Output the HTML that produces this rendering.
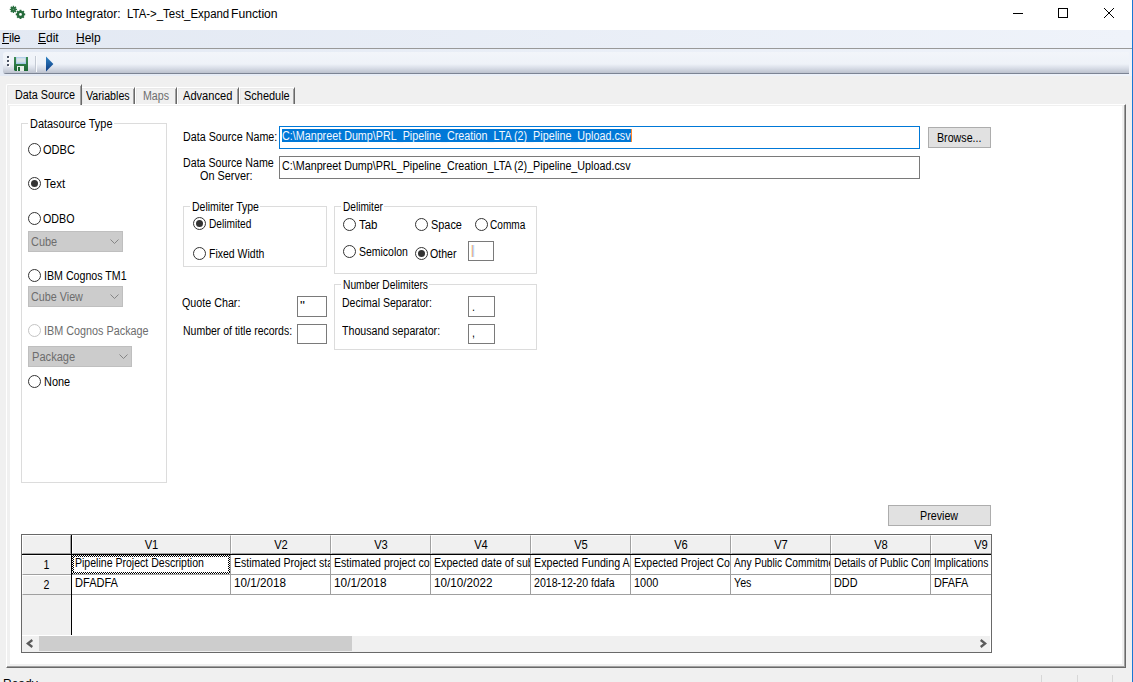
<!DOCTYPE html>
<html><head><meta charset="utf-8"><title>Turbo Integrator</title>
<style>
html,body{margin:0;padding:0;}
body{width:1133px;height:682px;position:relative;overflow:hidden;background:#f0f0f0;font-family:"Liberation Sans",sans-serif;font-size:12px;color:#000;}
.a{position:absolute;white-space:nowrap;}
.t{position:absolute;white-space:nowrap;font-size:12px;line-height:14px;height:14px;transform:scaleX(.9167);transform-origin:0 0;}
.g{color:#6d6d6d;}
#title{left:0;top:0;width:1132px;height:30px;background:#fff;}
#title .cap{font-size:12px;line-height:15px;}
#menu{left:0;top:30px;width:1132px;height:18px;background:linear-gradient(90deg,#e3e9f3,#eff3fa);}
#menu span{position:absolute;top:0;font-size:12px;line-height:16px;}
#tbbg{left:0;top:49px;width:1132px;height:27px;background:linear-gradient(90deg,#e4eaf4,#eff3fa);}
#tb{left:3px;top:52px;width:1126px;height:22px;border-radius:3px 0 0 3px;background:linear-gradient(180deg,#f2f5fa 0,#eef2f8 12px,#d9dee8 16px,#bcc2ce 21px,#7c8494 21px,#7c8494 22px);}
.radio{position:absolute;width:11px;height:11px;border:1px solid #333;border-radius:50%;background:#fff;}
.radio.on::after{content:"";position:absolute;left:2px;top:2px;width:7px;height:7px;border-radius:50%;background:#333;}
.radio.dis{border-color:#c4c4c4;}
.fs{position:absolute;border:1px solid #dcdcdc;box-sizing:border-box;}
.combo{position:absolute;background:#ccc;border:1px solid #bfbfbf;box-sizing:border-box;height:21px;}
.inp{position:absolute;background:#fff;border:1px solid #7a7a7a;box-sizing:border-box;}
.btn{position:absolute;background:#e1e1e1;border:1px solid #adadad;box-sizing:border-box;}
.tab{position:absolute;box-sizing:border-box;background:#f0f0f0;box-shadow:inset 1px 1px 0 #e9e9e9;border-left:1px solid #fff;border-top:1px solid #fff;border-right:1px solid #696969;}
.tab::after{content:"";position:absolute;right:0;top:1px;bottom:0;width:1px;background:#a0a0a0;}
.hc{position:absolute;box-sizing:border-box;background:#f0f0f0;border-left:1px solid #fff;border-top:1px solid #fff;border-right:1px solid #a0a0a0;border-bottom:1px solid #a0a0a0;}
.cell{position:absolute;box-sizing:border-box;background:#fff;border-right:1px solid #a0a0a0;border-bottom:1px solid #a0a0a0;overflow:hidden;}
</style></head><body>

<div id="title" class="a">
<svg class="a" style="left:8px;top:4px" width="20" height="20" viewBox="0 0 20 20">
 <path d="M4.66 2.91L4.71 1.77L6.09 1.77L6.14 2.91L6.64 3.12L7.48 2.34L8.46 3.32L7.68 4.16L7.89 4.66L9.03 4.71L9.03 6.09L7.89 6.14L7.68 6.64L8.46 7.48L7.48 8.46L6.64 7.68L6.14 7.89L6.09 9.03L4.71 9.03L4.66 7.89L4.16 7.68L3.32 8.46L2.34 7.48L3.12 6.64L2.91 6.14L1.77 6.09L1.77 4.71L2.91 4.66L3.12 4.16L2.34 3.32L3.32 2.34L4.16 3.12Z" fill="#2b7041"/>
 <circle cx="5.4" cy="5.4" r="0.7" fill="#5f9a70"/>
 <path d="M11.45 6.85L11.60 5.69L13.40 5.69L13.55 6.85L14.27 7.15L15.20 6.43L16.47 7.70L15.75 8.63L16.05 9.35L17.21 9.50L17.21 11.30L16.05 11.45L15.75 12.17L16.47 13.10L15.20 14.37L14.27 13.65L13.55 13.95L13.40 15.11L11.60 15.11L11.45 13.95L10.73 13.65L9.80 14.37L8.53 13.10L9.25 12.17L8.95 11.45L7.79 11.30L7.79 9.50L8.95 9.35L9.25 8.63L8.53 7.70L9.80 6.43L10.73 7.15ZM13.9 10.4A1.4 1.4 0 1 0 11.1 10.4A1.4 1.4 0 1 0 13.9 10.4Z" fill="#256b3b" fill-rule="evenodd"/>
</svg>
<span class="a cap" style="left:31.00px;top:7px;transform:scaleX(1.0075);transform-origin:0 0">Turbo Integrator:</span><span class="a cap" style="left:127.30px;top:7px;transform:scaleX(0.9526);transform-origin:0 0">LTA-&gt;_Test_Expand</span><span class="a cap" style="left:231.20px;top:7px;transform:scaleX(1.0125);transform-origin:0 0">Function</span>
<svg class="a" style="left:1008px;top:3px" width="112" height="22" viewBox="0 0 112 22" fill="none" stroke="#000" stroke-width="1">
 <path d="M5 10.5H15"/>
 <rect x="50.5" y="5.5" width="9" height="9"/>
 <path d="M96 5L106 15M106 5L96 15"/>
</svg>
</div>
<div class="a" style="left:1132px;top:0;width:1px;height:682px;background:#1878d4"></div>
<div id="menu" class="a"><span style="left:2px;letter-spacing:-0.3px"><u>F</u>ile</span><span style="left:38px"><u>E</u>dit</span><span style="left:76px"><u>H</u>elp</span></div>
<div class="a" style="left:0;top:48px;width:1132px;height:1px;background:#999"></div>
<div id="tbbg" class="a"></div>
<div id="tb" class="a"></div>
<svg class="a" style="left:4px;top:52px" width="56" height="22" viewBox="0 0 56 22">
 <defs><linearGradient id="gg" x1="0" y1="0" x2="0" y2="1"><stop offset="0" stop-color="#3c8c54"/><stop offset="1" stop-color="#1d6735"/></linearGradient>
 <linearGradient id="gb" x1="0" y1="0" x2="0" y2="1"><stop offset="0" stop-color="#2f82c4"/><stop offset="1" stop-color="#0c3b82"/></linearGradient>
 <linearGradient id="gl" x1="0" y1="0" x2="0" y2="1"><stop offset="0" stop-color="#a6cbea"/><stop offset=".3" stop-color="#dde5e8"/><stop offset=".75" stop-color="#d3dfe6"/><stop offset="1" stop-color="#a3c8e6"/></linearGradient></defs>
 <g fill="#fff"><rect x="4" y="5" width="2" height="2"/><rect x="4" y="9" width="2" height="2"/><rect x="4" y="13" width="2" height="2"/></g>
 <g fill="#4d5565"><rect x="3" y="4" width="2" height="2"/><rect x="3" y="8" width="2" height="2"/><rect x="3" y="12" width="2" height="2"/></g>
 <path d="M10 5H24V19H11L10 18Z" fill="url(#gg)"/>
 <rect x="12" y="5" width="10" height="7" fill="#a3c8e6"/>
 <rect x="12.6" y="5" width="8.8" height="6.5" fill="url(#gl)"/>
 <rect x="13" y="14" width="7" height="5" fill="#e6eee8"/>
 <rect x="14" y="15" width="2" height="4" fill="#1f6a37"/>
 <rect x="31" y="4" width="1" height="16" fill="#c3c9d3"/><rect x="32" y="4" width="1" height="16" fill="#f8fafd"/>
 <path d="M42 4.6L49.4 12L42 19.4Z" fill="url(#gb)"/>
</svg>

<div class="a" style="left:6px;top:104px;width:1120px;height:564px;box-sizing:border-box;background:#f0f0f0;border-left:1px solid #fff;border-top:1px solid #fff;border-right:1px solid #696969;border-bottom:1px solid #696969;">
 <div class="a" style="left:0;top:0;right:0;bottom:0;border-right:1px solid #a0a0a0;border-bottom:1px solid #a0a0a0;"></div>
</div>
<div id="page" class="a" style="left:10px;top:106px;width:1112px;height:558px;background:#fff;"></div>
<div class="tab" style="left:81px;top:87px;width:54px;height:17px"></div>
<div class="tab" style="left:135px;top:87px;width:42px;height:17px"></div>
<div class="tab" style="left:177px;top:87px;width:62px;height:17px"></div>
<div class="tab" style="left:239px;top:87px;width:56px;height:17px"></div>
<div class="tab" style="left:6px;top:84px;width:76px;height:21px;border-radius:2px 0 0 0"></div>
<div class="a" style="left:8px;top:104px;width:72px;height:1px;background:#fff"></div>

<span class="t " style="left:14.7px;top:88px;transform:scaleX(0.8995);">Data Source</span>
<span class="t " style="left:86.1px;top:89px;transform:scaleX(0.8894);">Variables</span>
<span class="t g" style="left:143.0px;top:89px;transform:scaleX(0.8860);">Maps</span>
<span class="t " style="left:183.2px;top:89px;transform:scaleX(0.9237);">Advanced</span>
<span class="t " style="left:244.3px;top:89px;transform:scaleX(0.9133);">Schedule</span>
<div class="fs" style="left:21px;top:123px;width:146px;height:360px"></div>
<div class="a" style="left:28px;top:123px;width:86px;height:1px;background:#fff"></div>
<span class="t " style="left:29.5px;top:117px;transform:scaleX(0.9116);">Datasource Type</span>
<i class="radio" style="left:28px;top:143px"></i>
<span class="t " style="left:42.7px;top:143px;transform:scaleX(0.9230);">ODBC</span>
<i class="radio on" style="left:28px;top:177px"></i>
<span class="t " style="left:43.7px;top:177px;transform:scaleX(0.9588);">Text</span>
<i class="radio" style="left:28px;top:212px"></i>
<span class="t " style="left:43.2px;top:212px;transform:scaleX(0.8914);">ODBO</span>
<div class="combo" style="left:28px;top:231px;width:95px"></div>
<span class="t g" style="left:30.9px;top:235px;transform:scaleX(0.9098);">Cube</span>
<svg class="a" style="left:110px;top:239px" width="9" height="6" viewBox="0 0 9 6"><path d="M0.5 0.5L4.5 4.5L8.5 0.5" fill="none" stroke="#858585" stroke-width="1"/></svg>
<i class="radio" style="left:28px;top:269px"></i>
<span class="t " style="left:43.5px;top:269px;transform:scaleX(0.8869);">IBM Cognos TM1</span>
<div class="combo" style="left:28px;top:286px;width:95px"></div>
<span class="t g" style="left:30.9px;top:290px;transform:scaleX(0.8977);">Cube View</span>
<svg class="a" style="left:110px;top:294px" width="9" height="6" viewBox="0 0 9 6"><path d="M0.5 0.5L4.5 4.5L8.5 0.5" fill="none" stroke="#858585" stroke-width="1"/></svg>
<i class="radio dis" style="left:28px;top:324px"></i>
<span class="t g" style="left:43.5px;top:324px;transform:scaleX(0.9012);">IBM Cognos Package</span>
<div class="combo" style="left:28px;top:346px;width:104px"></div>
<span class="t g" style="left:31.9px;top:350px;transform:scaleX(0.9251);">Package</span>
<svg class="a" style="left:119px;top:354px" width="9" height="6" viewBox="0 0 9 6"><path d="M0.5 0.5L4.5 4.5L8.5 0.5" fill="none" stroke="#858585" stroke-width="1"/></svg>
<i class="radio" style="left:28px;top:375px"></i>
<span class="t " style="left:43.8px;top:375px;transform:scaleX(0.9098);">None</span>
<span class="t " style="left:182.7px;top:130px;transform:scaleX(0.8948);">Data Source Name:</span>
<div class="inp" style="left:279px;top:126px;width:641px;height:23px;border-color:#0078d7"></div>
<div class="a" style="left:282px;top:129px;width:349px;height:13px;background:#0078d7"></div>
<span class="t " style="left:281.9px;top:129px;transform:scaleX(0.8957);color:#f4f9ff;">C:\Manpreet Dump\PRL_Pipeline_Creation_LTA (2)_Pipeline_Upload.csv</span>
<div class="a" style="left:631px;top:129px;width:1px;height:13px;background:#ff8728"></div>
<div class="btn" style="left:928px;top:127px;width:63px;height:21px"></div>
<span class="t " style="left:936.5px;top:131px;transform:scaleX(0.8897);">Browse...</span>
<span class="t " style="left:182.7px;top:156px;transform:scaleX(0.8888);">Data Source Name</span>
<span class="t " style="left:200.0px;top:169px;transform:scaleX(0.9066);">On Server:</span>
<div class="inp" style="left:279px;top:156px;width:641px;height:23px"></div>
<span class="t " style="left:281.9px;top:159px;transform:scaleX(0.8957);">C:\Manpreet Dump\PRL_Pipeline_Creation_LTA (2)_Pipeline_Upload.csv</span>
<div class="fs" style="left:183px;top:206px;width:144px;height:61px"></div>
<div class="a" style="left:190px;top:206px;width:70px;height:1px;background:#fff"></div>
<span class="t " style="left:191.8px;top:200px;transform:scaleX(0.8750);">Delimiter Type</span>
<i class="radio on" style="left:193px;top:217px"></i>
<span class="t " style="left:209.1px;top:217px;transform:scaleX(0.8457);">Delimited</span>
<i class="radio" style="left:193px;top:247px"></i>
<span class="t " style="left:209.1px;top:247px;transform:scaleX(0.8745);">Fixed Width</span>
<div class="fs" style="left:334px;top:206px;width:203px;height:68px"></div>
<div class="a" style="left:341px;top:206px;width:43px;height:1px;background:#fff"></div>
<span class="t " style="left:343.0px;top:200px;transform:scaleX(0.8429);">Delimiter</span>
<i class="radio" style="left:343px;top:218px"></i>
<span class="t " style="left:358.7px;top:218px;transform:scaleX(0.9562);">Tab</span>
<i class="radio" style="left:415px;top:218px"></i>
<span class="t " style="left:430.8px;top:218px;transform:scaleX(0.9081);">Space</span>
<i class="radio" style="left:475px;top:218px"></i>
<span class="t " style="left:490.3px;top:218px;transform:scaleX(0.8404);">Comma</span>
<i class="radio" style="left:343px;top:245px"></i>
<span class="t " style="left:358.7px;top:245px;transform:scaleX(0.8728);">Semicolon</span>
<i class="radio on" style="left:415px;top:247px"></i>
<span class="t " style="left:430.4px;top:247px;transform:scaleX(0.8830);">Other</span>
<div class="inp" style="left:468px;top:241px;width:26px;height:20px"></div>
<span class="t " style="left:470.6px;top:243px;transform:scaleX(0.8850);color:#e0954a;text-shadow:1px 0 #8fd0ff;">|</span>
<span class="t " style="left:182.1px;top:296px;transform:scaleX(0.8934);">Quote Char:</span>
<div class="inp" style="left:297px;top:296px;width:30px;height:21px"></div>
<span class="t " style="left:300px;top:299px;transform:scaleX(1.1500);">&quot;</span>
<span class="t " style="left:182.8px;top:324px;transform:scaleX(0.8748);">Number of title records:</span>
<div class="inp" style="left:297px;top:324px;width:30px;height:20px"></div>
<div class="fs" style="left:334px;top:284px;width:203px;height:66px"></div>
<div class="a" style="left:341px;top:284px;width:88px;height:1px;background:#fff"></div>
<span class="t " style="left:343.0px;top:278px;transform:scaleX(0.8555);">Number Delimiters</span>
<span class="t " style="left:342.2px;top:296px;transform:scaleX(0.8763);">Decimal Separator:</span>
<div class="inp" style="left:468px;top:296px;width:27px;height:21px"></div>
<span class="t " style="left:472px;top:300px;transform:scaleX(0.8850);">.</span>
<span class="t " style="left:342.3px;top:324px;transform:scaleX(0.8859);">Thousand separator:</span>
<div class="inp" style="left:468px;top:324px;width:27px;height:20px"></div>
<span class="t " style="left:472px;top:326px;transform:scaleX(0.8850);">,</span>
<div class="btn" style="left:888px;top:505px;width:103px;height:21px"></div>
<span class="t " style="left:919.6px;top:509px;transform:scaleX(0.8927);">Preview</span>
<div class="a" style="left:21px;top:534px;width:971px;height:119px;box-sizing:border-box;border:1px solid #696969;background:#fff;overflow:hidden" id="grid">
<div class="a" style="left:0;top:0;width:49px;height:100px;background:#f0f0f0"></div>
<div class="hc" style="left:0;top:0;width:49px;height:19px"></div>
<div class="hc" style="left:50px;top:0;width:159px;height:19px"></div>
<div class="hc" style="left:209px;top:0;width:100px;height:19px"></div>
<div class="hc" style="left:309px;top:0;width:100px;height:19px"></div>
<div class="hc" style="left:409px;top:0;width:100px;height:19px"></div>
<div class="hc" style="left:509px;top:0;width:100px;height:19px"></div>
<div class="hc" style="left:609px;top:0;width:100px;height:19px"></div>
<div class="hc" style="left:709px;top:0;width:100px;height:19px"></div>
<div class="hc" style="left:809px;top:0;width:100px;height:19px"></div>
<div class="hc" style="left:909px;top:0;width:100px;height:19px"></div>
<div class="hc" style="left:0;top:20px;width:49px;height:20px;border-right:none"></div>
<div class="cell" style="left:50px;top:20px;width:159px;height:20px"></div>
<div class="cell" style="left:209px;top:20px;width:100px;height:20px"></div>
<div class="cell" style="left:309px;top:20px;width:100px;height:20px"></div>
<div class="cell" style="left:409px;top:20px;width:100px;height:20px"></div>
<div class="cell" style="left:509px;top:20px;width:100px;height:20px"></div>
<div class="cell" style="left:609px;top:20px;width:100px;height:20px"></div>
<div class="cell" style="left:709px;top:20px;width:100px;height:20px"></div>
<div class="cell" style="left:809px;top:20px;width:100px;height:20px"></div>
<div class="cell" style="left:909px;top:20px;width:100px;height:20px"></div>
<div class="hc" style="left:0;top:40px;width:49px;height:20px;border-right:none"></div>
<div class="cell" style="left:50px;top:40px;width:159px;height:20px"></div>
<div class="cell" style="left:209px;top:40px;width:100px;height:20px"></div>
<div class="cell" style="left:309px;top:40px;width:100px;height:20px"></div>
<div class="cell" style="left:409px;top:40px;width:100px;height:20px"></div>
<div class="cell" style="left:509px;top:40px;width:100px;height:20px"></div>
<div class="cell" style="left:609px;top:40px;width:100px;height:20px"></div>
<div class="cell" style="left:709px;top:40px;width:100px;height:20px"></div>
<div class="cell" style="left:809px;top:40px;width:100px;height:20px"></div>
<div class="cell" style="left:909px;top:40px;width:100px;height:20px"></div>
<div class="a" style="left:49px;top:0;width:1px;height:100px;background:#000"></div>
<div class="a" style="left:0;top:19px;width:969px;height:1px;background:#000"></div>
<div class="a" style="left:0;top:101px;width:968px;height:16px;background:#f0f0f0"></div>
<div class="a" style="left:17px;top:101px;width:313px;height:15px;background:#cdcdcd"></div>
<svg class="a" style="left:4px;top:104px" width="8" height="9" viewBox="0 0 8 9"><path d="M6.3 1L1.8 4.5L6.3 8" fill="none" stroke="#5a5a5a" stroke-width="2.3"/></svg>
<svg class="a" style="left:957px;top:104px" width="8" height="9" viewBox="0 0 8 9"><path d="M1.7 1L6.2 4.5L1.7 8" fill="none" stroke="#5a5a5a" stroke-width="2.3"/></svg>
</div>
<div class="a" style="left:72px;top:536px;width:159px;height:18px;overflow:hidden"><span class="t" style="left:0;top:2px;width:170.97px;text-align:center;transform:scaleX(.93)">V1</span></div>
<div class="a" style="left:231px;top:536px;width:100px;height:18px;overflow:hidden"><span class="t" style="left:0;top:2px;width:107.53px;text-align:center;transform:scaleX(.93)">V2</span></div>
<div class="a" style="left:331px;top:536px;width:100px;height:18px;overflow:hidden"><span class="t" style="left:0;top:2px;width:107.53px;text-align:center;transform:scaleX(.93)">V3</span></div>
<div class="a" style="left:431px;top:536px;width:100px;height:18px;overflow:hidden"><span class="t" style="left:0;top:2px;width:107.53px;text-align:center;transform:scaleX(.93)">V4</span></div>
<div class="a" style="left:531px;top:536px;width:100px;height:18px;overflow:hidden"><span class="t" style="left:0;top:2px;width:107.53px;text-align:center;transform:scaleX(.93)">V5</span></div>
<div class="a" style="left:631px;top:536px;width:100px;height:18px;overflow:hidden"><span class="t" style="left:0;top:2px;width:107.53px;text-align:center;transform:scaleX(.93)">V6</span></div>
<div class="a" style="left:731px;top:536px;width:100px;height:18px;overflow:hidden"><span class="t" style="left:0;top:2px;width:107.53px;text-align:center;transform:scaleX(.93)">V7</span></div>
<div class="a" style="left:831px;top:536px;width:100px;height:18px;overflow:hidden"><span class="t" style="left:0;top:2px;width:107.53px;text-align:center;transform:scaleX(.93)">V8</span></div>
<div class="a" style="left:931px;top:536px;width:60px;height:18px;overflow:hidden"><span class="t" style="left:0;top:2px;width:107.53px;text-align:center;transform:scaleX(.93)">V9</span></div>
<div class="a" style="left:72px;top:555px;width:158px;height:18px;overflow:hidden"><span class="t" style="left:3.00px;top:1px;transform:scaleX(0.8784)">Pipeline Project Description</span></div>
<div class="a" style="left:231px;top:555px;width:99px;height:18px;overflow:hidden"><span class="t" style="left:3.00px;top:1px;transform:scaleX(0.8741)">Estimated Project start date</span></div>
<div class="a" style="left:331px;top:555px;width:99px;height:18px;overflow:hidden"><span class="t" style="left:3.00px;top:1px;transform:scaleX(0.8803)">Estimated project completion</span></div>
<div class="a" style="left:431px;top:555px;width:99px;height:18px;overflow:hidden"><span class="t" style="left:3.00px;top:1px;transform:scaleX(0.8843)">Expected date of submission</span></div>
<div class="a" style="left:531px;top:555px;width:99px;height:18px;overflow:hidden"><span class="t" style="left:3.00px;top:1px;transform:scaleX(0.8902)">Expected Funding Amount</span></div>
<div class="a" style="left:631px;top:555px;width:99px;height:18px;overflow:hidden"><span class="t" style="left:3.00px;top:1px;transform:scaleX(0.8767)">Expected Project Cost</span></div>
<div class="a" style="left:731px;top:555px;width:99px;height:18px;overflow:hidden"><span class="t" style="left:3.00px;top:1px;transform:scaleX(0.8486)">Any Public Commitment</span></div>
<div class="a" style="left:831px;top:555px;width:99px;height:18px;overflow:hidden"><span class="t" style="left:3.00px;top:1px;transform:scaleX(0.8610)">Details of Public Commitment</span></div>
<div class="a" style="left:931px;top:555px;width:59px;height:18px;overflow:hidden"><span class="t" style="left:3.00px;top:1px;transform:scaleX(0.8586)">Implications</span></div>
<div class="a" style="left:72px;top:575px;width:158px;height:18px;overflow:hidden"><span class="t" style="left:3.00px;top:1px;transform:scaleX(0.9212)">DFADFA</span></div>
<div class="a" style="left:231px;top:575px;width:99px;height:18px;overflow:hidden"><span class="t" style="left:3.00px;top:1px;transform:scaleX(0.9722)">10/1/2018</span></div>
<div class="a" style="left:331px;top:575px;width:99px;height:18px;overflow:hidden"><span class="t" style="left:3.00px;top:1px;transform:scaleX(0.9834)">10/1/2018</span></div>
<div class="a" style="left:431px;top:575px;width:99px;height:18px;overflow:hidden"><span class="t" style="left:3.00px;top:1px;transform:scaleX(0.9724)">10/10/2022</span></div>
<div class="a" style="left:531px;top:575px;width:99px;height:18px;overflow:hidden"><span class="t" style="left:3.00px;top:1px;transform:scaleX(0.8818)">2018-12-20 fdafa</span></div>
<div class="a" style="left:631px;top:575px;width:99px;height:18px;overflow:hidden"><span class="t" style="left:3.00px;top:1px;transform:scaleX(0.9103)">1000</span></div>
<div class="a" style="left:731px;top:575px;width:99px;height:18px;overflow:hidden"><span class="t" style="left:3.00px;top:1px;transform:scaleX(0.8888)">Yes</span></div>
<div class="a" style="left:831px;top:575px;width:99px;height:18px;overflow:hidden"><span class="t" style="left:3.00px;top:1px;transform:scaleX(0.9039)">DDD</span></div>
<div class="a" style="left:931px;top:575px;width:59px;height:18px;overflow:hidden"><span class="t" style="left:3.00px;top:1px;transform:scaleX(0.9024)">DFAFA</span></div>
<span class="t " style="left:22px;top:558px;transform:scaleX(0.8850);width:55.37px;text-align:center;">1</span>
<span class="t " style="left:22px;top:578px;transform:scaleX(0.8850);width:55.37px;text-align:center;">2</span>
<div class="a" style="left:72px;top:555px;width:158px;height:2px;background:repeating-conic-gradient(#000 0 25%,#fff 0 50%) 0 0/2px 2px"></div>
<div class="a" style="left:72px;top:572px;width:158px;height:2px;background:repeating-conic-gradient(#000 0 25%,#fff 0 50%) 0 0/2px 2px"></div>
<div class="a" style="left:72px;top:557px;width:2px;height:15px;background:repeating-conic-gradient(#000 0 25%,#fff 0 50%) 0 0/2px 2px"></div>
<div class="a" style="left:228px;top:557px;width:2px;height:15px;background:repeating-conic-gradient(#000 0 25%,#fff 0 50%) 0 0/2px 2px"></div>
<span class="a" style="left:3px;top:677px;font-size:12px;line-height:15px">Ready</span>
<div class="a" style="left:1041px;top:675px;width:1px;height:7px;background:#d7d7d7"></div>
<div class="a" style="left:1077px;top:675px;width:1px;height:7px;background:#d7d7d7"></div>
<div class="a" style="left:1112px;top:675px;width:1px;height:7px;background:#d7d7d7"></div>
</body></html>
